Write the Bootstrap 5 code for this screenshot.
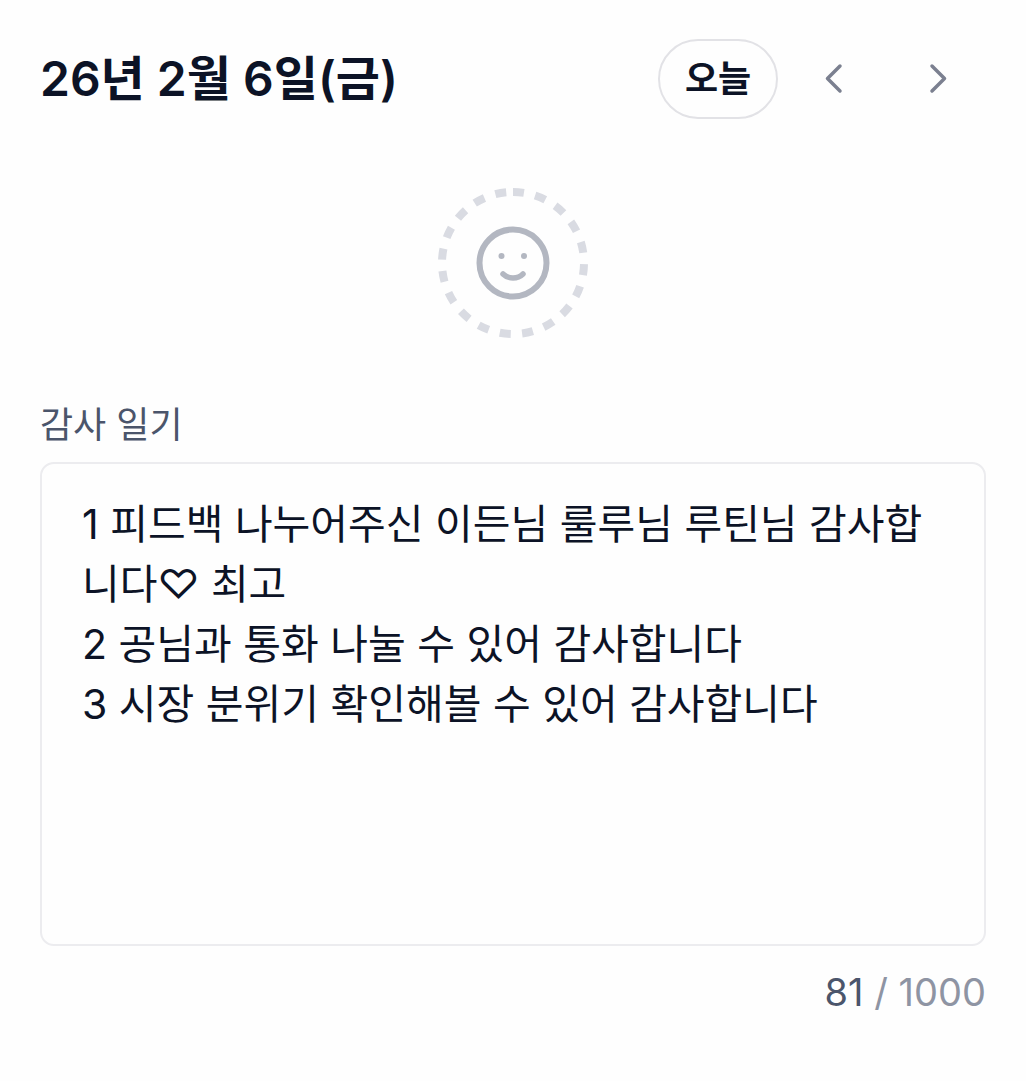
<!DOCTYPE html>
<html lang="ko">
<head>
<meta charset="utf-8">
<meta name="viewport" content="width=device-width, initial-scale=1">
<title>감사 일기</title>
<link href="https://cdn.jsdelivr.net/npm/bootstrap@5.3.0/dist/css/bootstrap.min.css" rel="stylesheet">
<style>
body { font-family: Inter, "Noto Sans CJK KR", sans-serif; color: #0c1326; background: #fefefe; }
.diary { padding: 39px 40px 40px; }
.diary-date { font-size: 48px; line-height: 80px; font-weight: 600; }
.btn-today { width: 120px; height: 80px; border: 2px solid #e2e2e6; font-size: 36px; line-height: 1; font-weight: 600; color: #0c1326; padding: 0; }
.btn-step { width: 98px; height: 80px; color: #7b8090; padding: 0; border: 0; }
.btn-mood { margin-top: 68px; line-height: 0; }
.diary-label { margin-top: 60px; font-size: 36px; line-height: 52px; color: #4b556b; }
.diary-text { height: 484px; margin-top: 11px; border: 2px solid #ececef; border-radius: 14px; padding: 30px 40px; font-size: 41px; line-height: 60px; color: #0c1326; background: #fefefe; resize: none; overflow: hidden; }
.diary-count { margin-top: 19px; font-size: 38px; line-height: 54px; color: #8e94a3; }
.diary-count span { color: #4b556b; }
</style>
<script src="https://cdn.jsdelivr.net/npm/bootstrap@5.3.0/dist/js/bootstrap.bundle.min.js"></script>
</head>
<body>
<main class="diary">
  <header class="d-flex align-items-center justify-content-between">
    <h1 class="diary-date m-0">26년 2월 6일(금)</h1>
    <div class="d-flex align-items-center gap-1">
      <button type="button" class="btn btn-today rounded-pill me-1">오늘</button>
      <button type="button" class="btn btn-step" aria-label="이전 날"><svg width="40" height="40" viewBox="0 0 40 40" fill="none" stroke="currentColor" stroke-width="3.5" stroke-linecap="round" stroke-linejoin="round"><path d="M25 7 12.500 19.500 25 32"/></svg></button>
      <button type="button" class="btn btn-step" aria-label="다음 날"><svg width="40" height="40" viewBox="0 0 40 40" fill="none" stroke="currentColor" stroke-width="3.5" stroke-linecap="round" stroke-linejoin="round"><path d="M15 7 27.500 19.500 15 32"/></svg></button>
    </div>
  </header>
  <div class="text-center">
    <button type="button" class="btn btn-mood p-0 border-0 rounded-circle" aria-label="기분 선택">
      <svg width="152" height="152" viewBox="0 0 152 152" fill="none"><circle cx="76" cy="76" r="71" stroke="#d9dbe2" stroke-width="8" stroke-dasharray="11 11.5" transform="rotate(-90 76 76)"/><circle cx="76" cy="76" r="33.5" stroke="#b3b7c1" stroke-width="6"/><circle cx="64.5" cy="69" r="3" fill="#b3b7c1"/><circle cx="87" cy="69" r="3" fill="#b3b7c1"/><path d="M66 87q4 4 10 4t10-4" stroke="#b3b7c1" stroke-width="5.5" stroke-linecap="round"/></svg>
    </button>
  </div>
  <label for="diary" class="diary-label d-block">감사 일기</label>
  <textarea id="diary" class="diary-text form-control" maxlength="1000">1 피드백 나누어주신 이든님 룰루님 루틴님 감사합니다♡ 최고
2 공님과 통화 나눌 수 있어 감사합니다
3 시장 분위기 확인해볼 수 있어 감사합니다</textarea>
  <div class="diary-count text-end"><span>81</span> / 1000</div>
</main>
</body>
</html>
